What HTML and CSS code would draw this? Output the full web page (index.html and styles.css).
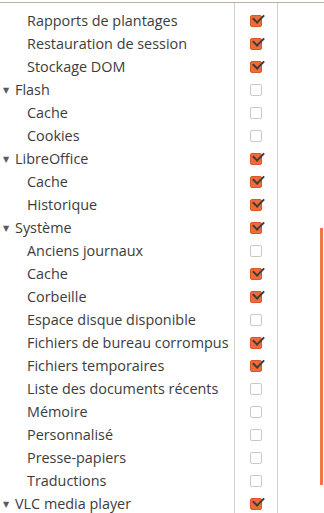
FILE: index.html
```html
<!DOCTYPE html>
<html lang="fr">
<head>
<meta charset="utf-8">
<link rel="stylesheet" href="styles.css">
</head>
<body>
<div class="view">
  <div class="tree">
    <div class="row spacer"><span class="label"></span><span class="check"></span><span class="rest"></span></div>
    <div class="row child"><span class="label">Rapports de plantages</span><span class="check"><i class="cb on"></i></span><span class="rest"></span></div>
    <div class="row child"><span class="label">Restauration de session</span><span class="check"><i class="cb on"></i></span><span class="rest"></span></div>
    <div class="row child"><span class="label">Stockage DOM</span><span class="check"><i class="cb on"></i></span><span class="rest"></span></div>
    <div class="row parent"><span class="label"><b class="tri">▼</b>Flash</span><span class="check"><i class="cb"></i></span><span class="rest"></span></div>
    <div class="row child"><span class="label">Cache</span><span class="check"><i class="cb"></i></span><span class="rest"></span></div>
    <div class="row child"><span class="label">Cookies</span><span class="check"><i class="cb"></i></span><span class="rest"></span></div>
    <div class="row parent"><span class="label"><b class="tri">▼</b>LibreOffice</span><span class="check"><i class="cb on"></i></span><span class="rest"></span></div>
    <div class="row child"><span class="label">Cache</span><span class="check"><i class="cb on"></i></span><span class="rest"></span></div>
    <div class="row child"><span class="label">Historique</span><span class="check"><i class="cb on"></i></span><span class="rest"></span></div>
    <div class="row parent"><span class="label"><b class="tri">▼</b>Système</span><span class="check"><i class="cb on"></i></span><span class="rest"></span></div>
    <div class="row child"><span class="label">Anciens journaux</span><span class="check"><i class="cb"></i></span><span class="rest"></span></div>
    <div class="row child"><span class="label">Cache</span><span class="check"><i class="cb on"></i></span><span class="rest"></span></div>
    <div class="row child"><span class="label">Corbeille</span><span class="check"><i class="cb on"></i></span><span class="rest"></span></div>
    <div class="row child"><span class="label">Espace disque disponible</span><span class="check"><i class="cb"></i></span><span class="rest"></span></div>
    <div class="row child"><span class="label">Fichiers de bureau corrompus</span><span class="check"><i class="cb on"></i></span><span class="rest"></span></div>
    <div class="row child"><span class="label">Fichiers temporaires</span><span class="check"><i class="cb on"></i></span><span class="rest"></span></div>
    <div class="row child"><span class="label">Liste des documents récents</span><span class="check"><i class="cb"></i></span><span class="rest"></span></div>
    <div class="row child"><span class="label">Mémoire</span><span class="check"><i class="cb"></i></span><span class="rest"></span></div>
    <div class="row child"><span class="label">Personnalisé</span><span class="check"><i class="cb"></i></span><span class="rest"></span></div>
    <div class="row child"><span class="label">Presse-papiers</span><span class="check"><i class="cb"></i></span><span class="rest"></span></div>
    <div class="row child"><span class="label">Traductions</span><span class="check"><i class="cb"></i></span><span class="rest"></span></div>
    <div class="row parent"><span class="label"><b class="tri">▼</b>VLC media player</span><span class="check"><i class="cb on"></i></span><span class="rest"></span></div>
    <div class="row spacer tail"><span class="label"></span><span class="check"></span><span class="rest"></span></div>
  </div>
  <div class="scrollbar"></div>
</div>
</body>
</html>
```
FILE: styles.css
```css
html, body {
  margin: 0;
  padding: 0;
  background: #ffffff;
}
body {
  font-family: "Open Sans", "DejaVu Sans", sans-serif;
  font-size: 14.4px;
  color: #3c3c3c;
  overflow: hidden;
}
.view {
  position: relative;
  width: 324px;
  height: 513px;
  overflow: hidden;
}
.tree {
  margin-top: 2px;
  border-top: 1px solid #bfae9e;
  display: flex;
  flex-direction: column;
}
.row {
  display: flex;
  height: 23px;
  flex: none;
}
.row.spacer { height: 6px; }
.row.tail { height: 20px; }
.label {
  width: 234px;
  flex: none;
  white-space: nowrap;
  display: flex;
  align-items: center;
}
.child .label { padding-left: 27px; box-sizing: border-box; }
.parent .label { padding-left: 3px; box-sizing: border-box; }
.tri {
  font-weight: normal;
  font-size: 8px;
  width: 12px;
  color: #5a5a5a;
  display: inline-block;
}
.check {
  width: 44px;
  flex: none;
  box-sizing: border-box;
  border-left: 1px solid #d3cfcb;
  border-right: 1px solid #d3cfcb;
  display: flex;
  align-items: center;
  justify-content: center;
}
.rest { flex: 1; }
.cb {
  position: relative;
  display: block;
  width: 10px;
  height: 10px;
  border: 1px solid #cfc8c1;
  border-radius: 2px;
  background: #ffffff;
}
.cb.on {
  background: #ef6c3a;
  border-color: #d9582a;
}
.cb.on::after {
  content: "";
  position: absolute;
  left: 2px;
  top: -2px;
  width: 9px;
  height: 5px;
  border-left: 2px solid #3c3c3c;
  border-bottom: 2px solid #3c3c3c;
  transform: rotate(-45deg);
}
.scrollbar {
  position: absolute;
  left: 320px;
  top: 228px;
  width: 3px;
  height: 257px;
  background: #f07746;
}
```
